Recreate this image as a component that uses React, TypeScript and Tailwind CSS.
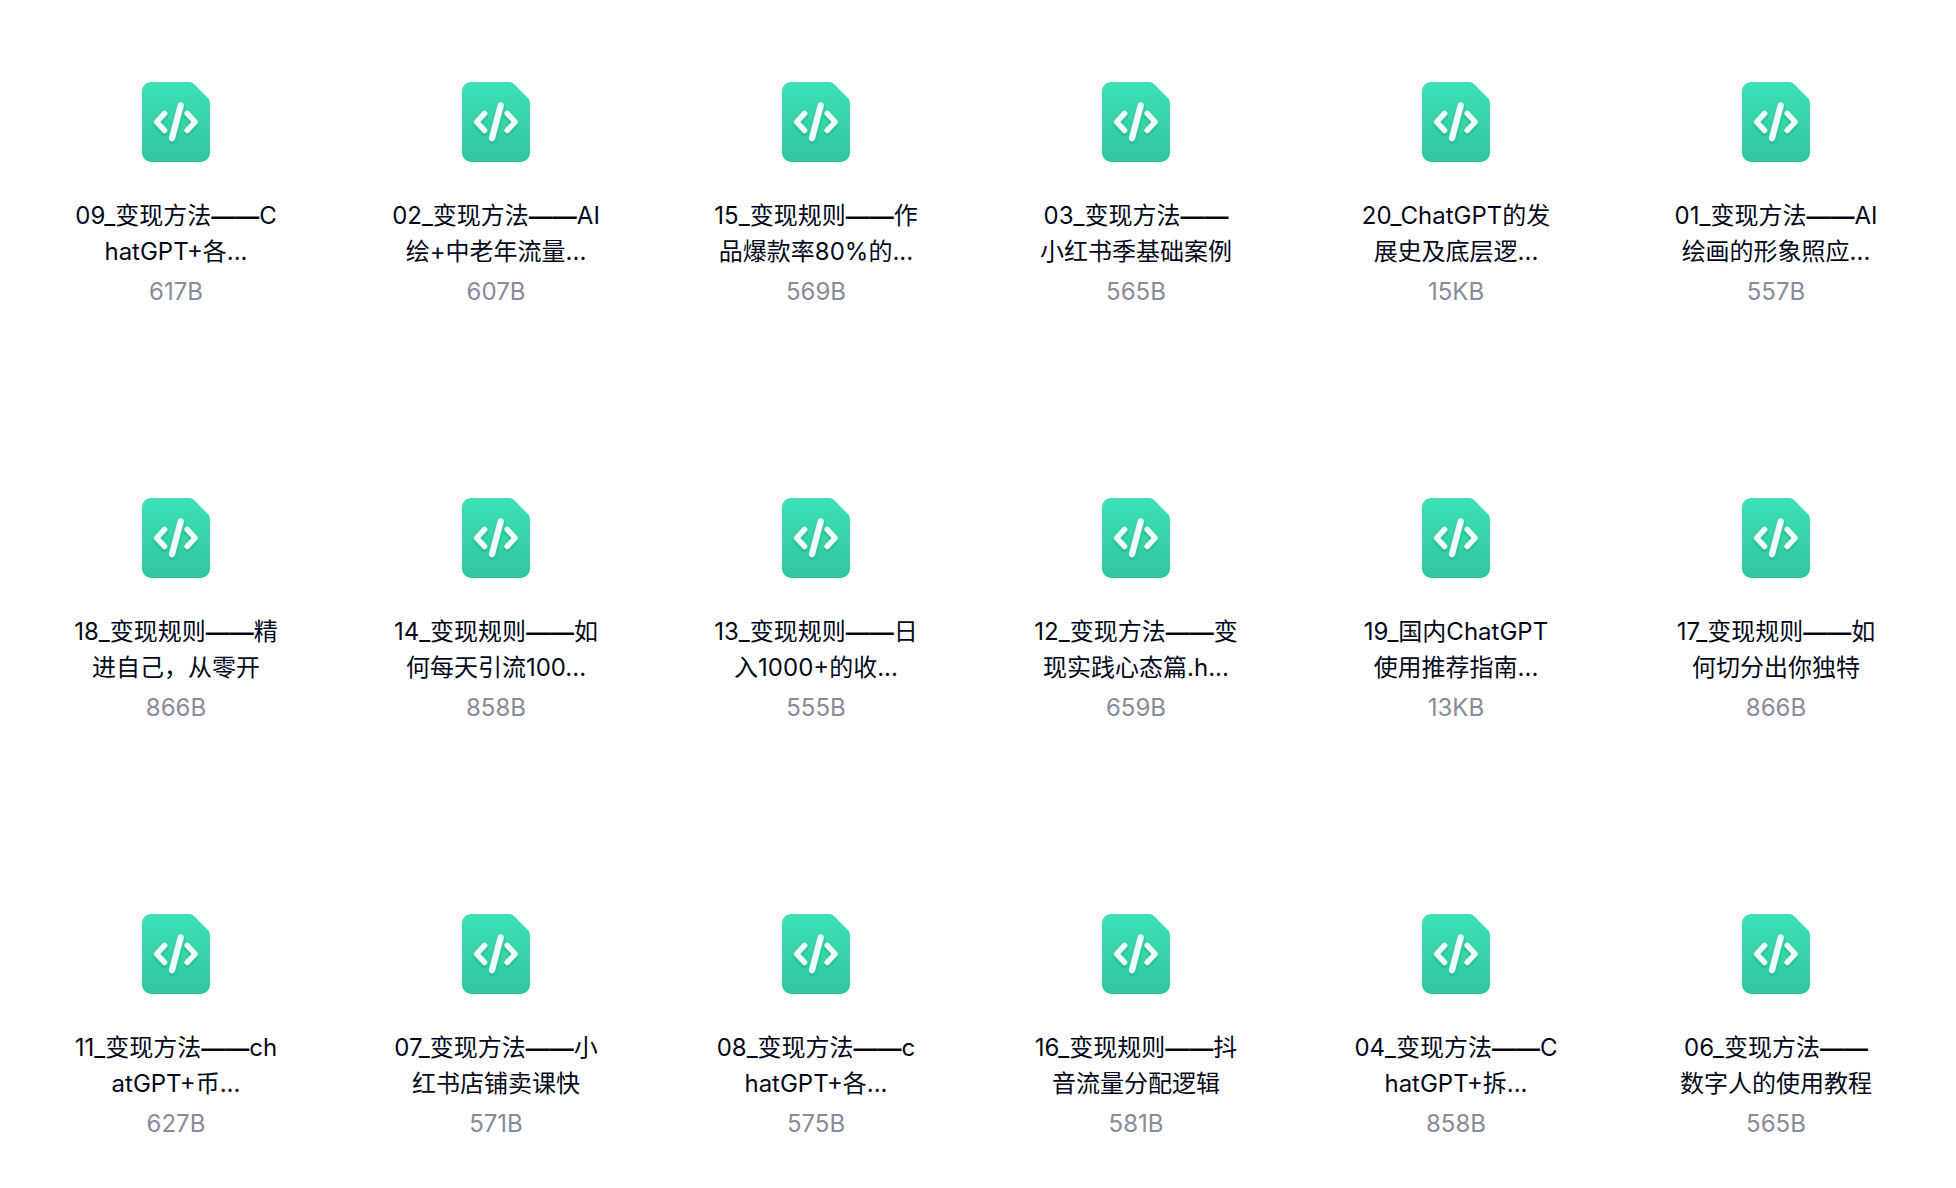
import { Fragment } from "react";

interface FileItem {
  title: string[];
  size: string;
}

const files: FileItem[] = [
  { title: ["09_变现方法——C", "hatGPT+各..."], size: "617B" },
  { title: ["02_变现方法——AI", "绘+中老年流量..."], size: "607B" },
  { title: ["15_变现规则——作", "品爆款率80%的..."], size: "569B" },
  { title: ["03_变现方法——", "小红书季基础案例"], size: "565B" },
  { title: ["20_ChatGPT的发", "展史及底层逻..."], size: "15KB" },
  { title: ["01_变现方法——AI", "绘画的形象照应..."], size: "557B" },
  { title: ["18_变现规则——精", "进自己，从零开"], size: "866B" },
  { title: ["14_变现规则——如", "何每天引流100..."], size: "858B" },
  { title: ["13_变现规则——日", "入1000+的收..."], size: "555B" },
  { title: ["12_变现方法——变", "现实践心态篇.h..."], size: "659B" },
  { title: ["19_国内ChatGPT", "使用推荐指南..."], size: "13KB" },
  { title: ["17_变现规则——如", "何切分出你独特"], size: "866B" },
  { title: ["11_变现方法——ch", "atGPT+币..."], size: "627B" },
  { title: ["07_变现方法——小", "红书店铺卖课快"], size: "571B" },
  { title: ["08_变现方法——c", "hatGPT+各..."], size: "575B" },
  { title: ["16_变现规则——抖", "音流量分配逻辑"], size: "581B" },
  { title: ["04_变现方法——C", "hatGPT+拆..."], size: "858B" },
  { title: ["06_变现方法——", "数字人的使用教程"], size: "565B" },
];

const CodeFileIcon = () => {
  return (
    <svg className="h-20 w-[68px]" viewBox="0 0 68 80" fill="none" aria-hidden="true">
      <defs>
        <linearGradient id="paper" x1="0" y1="0" x2="0" y2="1">
          <stop offset="0" stopColor="#3ce0b6" />
          <stop offset="1" stopColor="#33c6a0" />
        </linearGradient>
        <filter id="shadow" x="-20%" y="-20%" width="140%" height="150%">
          <feDropShadow dx="0" dy="2" stdDeviation="1.5" floodColor="#14936f" floodOpacity="0.5" />
        </filter>
      </defs>
      <path
        d="M9 0H46.5C49 0 51 .9 52.8 2.7L65.4 15.6C67.1 17.3 68 19.2 68 21.6V71A9 9 0 0 1 59 80H9A9 9 0 0 1 0 71V9A9 9 0 0 1 9 0Z"
        fill="url(#paper)"
      />
      <g
        filter="url(#shadow)"
        stroke="#effffa"
        strokeWidth="5.4"
        strokeLinecap="round"
        strokeLinejoin="round"
      >
        <path d="M22.6 31.4L14.6 40L22.6 48.4" />
        <path d="M45.2 31.4L53.2 40L45.2 48.4" />
        <path d="M38.7 23.5L30 56" strokeWidth="6.2" />
      </g>
    </svg>
  );
};

// the double dash has to be one unbroken full-width rule
const TitleLine = ({ text }: { text: string }) => {
  return (
    <span className="block whitespace-nowrap">
      {text.split("——").map((part, index) => (
        <Fragment key={index}>
          {index > 0 && (
            <span className="font-['Liberation_Sans',sans-serif] leading-none font-bold">——</span>
          )}
          {part}
        </Fragment>
      ))}
    </span>
  );
};

const FileCard = ({ file }: { file: FileItem }) => {
  return (
    <li className="flex flex-col items-center text-center text-2xl leading-9">
      <CodeFileIcon />
      <h2 className="mt-9 text-[#03081a]">
        {file.title.map((line) => (
          <TitleLine key={line} text={line} />
        ))}
      </h2>
      <p className="mt-1 text-[#878c9a]">{file.size}</p>
    </li>
  );
};

const App = () => {
  return (
    <main
      lang="zh-CN"
      className="min-h-screen bg-white pt-[82px] pr-5 pl-4 font-[Inter,'Noto_Sans_CJK_SC',sans-serif]"
    >
      <ul className="grid grid-cols-6 gap-y-[188px]">
        {files.map((file) => (
          <FileCard key={file.title.join("")} file={file} />
        ))}
      </ul>
    </main>
  );
};

export default App;
